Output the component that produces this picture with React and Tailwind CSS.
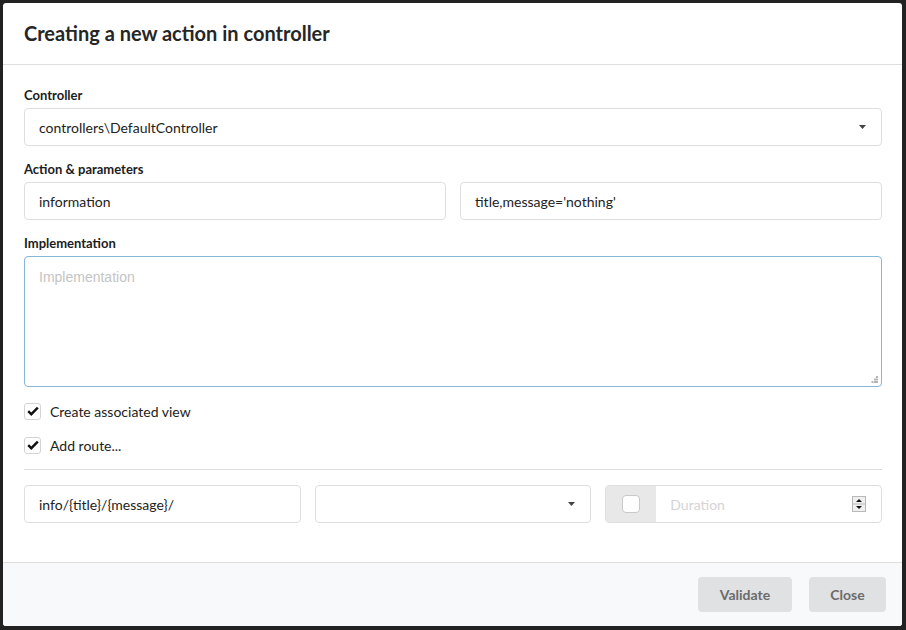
import React from 'react'

// Small dark triangle used by the dropdowns
function Caret() {
  return (
    <svg width="7" height="4" viewBox="0 0 7 4" aria-hidden="true">
      <path d="M0 0h7L3.5 4z" fill="#444" />
    </svg>
  )
}

function CheckRow({ label }) {
  return (
    <div className="flex items-center h-5">
      <span className="w-[17px] h-[17px] rounded-[3px] border border-[#d4d4d5] bg-white flex items-center justify-center">
        <svg width="12" height="10" viewBox="0 0 12 10" aria-hidden="true">
          <path d="M1.2 5.2 4.3 8.2 10.8 1.6" fill="none" stroke="#111" strokeWidth="2.4" />
        </svg>
      </span>
      <span className="ml-[9px] text-[14px] text-[#222]">{label}</span>
    </div>
  )
}

function Box({ children, className = '' }) {
  return (
    <div
      className={[
        'h-[38px] rounded-[4px] border border-[#dedede] bg-white flex items-center px-[14px] text-[14px] text-[#222]',
        className,
      ].join(' ')}
    >
      {children}
    </div>
  )
}

export default function App() {
  return (
    <div
      className="w-[906px] h-[630px] bg-[#222] p-[3px] pr-[4px] pb-[4px]"
      style={{ fontFamily: 'Lato, "Open Sans", sans-serif' }}
    >
      <div className="h-full bg-white rounded-[3px] flex flex-col overflow-hidden">
        {/* Header */}
        <div className="h-[62px] border-b border-[#dedede] px-[21px] pb-[2px] flex items-center">
          <h1 className="text-[20px] font-bold text-[#262626]">Creating a new action in controller</h1>
        </div>

        {/* Body */}
        <div className="flex-1 pt-[21px] pl-[21px] pr-[20px]">
          <div className="text-[13px] font-bold text-[#1c1c1c] h-[18px] leading-[18px] mb-[4px]">Controller</div>
          <Box className="justify-between pr-[15px]">
            <span>controllers\DefaultController</span>
            <Caret />
          </Box>

          <div className="mt-[14px] text-[13px] font-bold text-[#1c1c1c] h-[18px] leading-[18px] mb-[4px]">Action &amp; parameters</div>
          <div className="grid grid-cols-2 gap-[14px]">
            <Box>information</Box>
            <Box>title,message='nothing'</Box>
          </div>

          <div className="mt-[14px] text-[13px] font-bold text-[#1c1c1c] h-[18px] leading-[18px] mb-[4px]">Implementation</div>
          <div
            className="relative h-[131px] rounded-[4px] border border-[#85b7d9] bg-white px-[14px] pt-[10px] text-[14px] text-[#c4c4c4]"
            style={{ fontFamily: '"Liberation Sans", Arial, sans-serif' }}
          >
            Implementation
            <svg className="absolute right-[3px] bottom-[3px]" width="7" height="7" viewBox="0 0 7 7" aria-hidden="true">
              <g fill="#b5b5b5">
                <rect x="5" y="0" width="2" height="2" />
                <rect x="3" y="2.5" width="2" height="2" />
                <rect x="5" y="2.5" width="2" height="2" />
                <rect x="0.5" y="5" width="2" height="2" />
                <rect x="3" y="5" width="2" height="2" />
                <rect x="5" y="5" width="2" height="2" />
              </g>
            </svg>
          </div>

          <div className="mt-[14px] flex flex-col gap-[14px]">
            <CheckRow label="Create associated view" />
            <CheckRow label="Add route..." />
          </div>

          <div className="mt-[14px] border-t border-[#dedede]" />

          <div className="mt-[15px] grid grid-cols-3 gap-[14px]">
            <Box>info/{'{title}'}/{'{message}'}/</Box>
            <Box className="justify-end pr-[15px]">
              <Caret />
            </Box>
            <div className="h-[38px] rounded-[4px] border border-[#dedede] bg-white flex overflow-hidden">
              <div className="w-[50px] bg-[#e8e8e8] flex items-center justify-center">
                <span className="w-[18px] h-[18px] rounded-[4px] border border-[#c8c8c8] bg-white" />
              </div>
              <div className="flex-1 flex items-center justify-between pl-[14px] pr-[15px] text-[14px] text-[#d4d4d4]">
                <span>Duration</span>
                <svg width="14" height="16" viewBox="0 0 14 16" aria-hidden="true">
                  <rect x="0.5" y="0.5" width="13" height="15" fill="#f0f0f0" stroke="#b8b8b8" />
                  <line x1="1" y1="8" x2="13" y2="8" stroke="#b8b8b8" />
                  <path d="M4 6h6L7 3z" fill="#111" />
                  <path d="M4 10h6L7 13z" fill="#111" />
                </svg>
              </div>
            </div>
          </div>
        </div>

        {/* Footer */}
        <div className="h-[64px] border-t border-[#dedede] bg-[#f8f9fb] flex items-center justify-end pr-[16px] gap-[17px]">
          <button className="w-[94px] h-[35px] rounded-[4px] bg-[#e0e1e2] text-[14px] font-bold text-[#6b6b6b]">Validate</button>
          <button className="w-[77px] h-[35px] rounded-[4px] bg-[#e0e1e2] text-[14px] font-bold text-[#6b6b6b]">Close</button>
        </div>
      </div>
    </div>
  )
}
